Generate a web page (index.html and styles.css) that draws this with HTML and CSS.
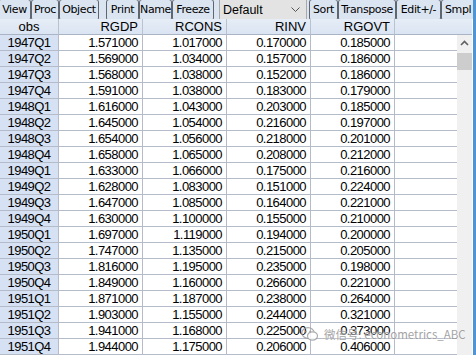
FILE: index.html
```html
<!DOCTYPE html>
<html>
<head>
<meta charset="utf-8">
<link rel="stylesheet" href="styles.css">
</head>
<body>
<div class="win">
  <div class="main">
    <div class="toolbar">
      <span class="btn b-view">View</span>
      <span class="btn b-proc">Proc</span>
      <span class="btn b-object">Object</span>
      <span class="btn b-print">Print</span>
      <span class="btn b-name">Name</span>
      <span class="btn b-freeze">Freeze</span>
      <span class="combo">Default
        <svg class="chev" width="9" height="6" viewBox="0 0 9 6"><path d="M0.5 0.5 L4.5 4.5 L8.5 0.5" fill="none" stroke="#555" stroke-width="1"/></svg>
      </span>
      <span class="btn b-sort">Sort</span>
      <span class="btn b-transpose">Transpose</span>
      <span class="btn b-edit">Edit+/-</span>
      <span class="btn b-smpl">Smpl</span>
    </div>
    <div class="body">
      <div class="grid">
        <div class="h obs">obs</div><div class="h">RGDP</div><div class="h">RCONS</div><div class="h">RINV</div><div class="h">RGOVT</div><div class="h fill"></div>
        <div class="o">1947Q1</div><div class="c">1.571000</div><div class="c">1.017000</div><div class="c">0.170000</div><div class="c">0.185000</div><div class="c fill"></div>
        <div class="o">1947Q2</div><div class="c">1.569000</div><div class="c">1.034000</div><div class="c">0.157000</div><div class="c">0.186000</div><div class="c fill"></div>
        <div class="o">1947Q3</div><div class="c">1.568000</div><div class="c">1.038000</div><div class="c">0.152000</div><div class="c">0.186000</div><div class="c fill"></div>
        <div class="o">1947Q4</div><div class="c">1.591000</div><div class="c">1.038000</div><div class="c">0.183000</div><div class="c">0.179000</div><div class="c fill"></div>
        <div class="o">1948Q1</div><div class="c">1.616000</div><div class="c">1.043000</div><div class="c">0.203000</div><div class="c">0.185000</div><div class="c fill"></div>
        <div class="o">1948Q2</div><div class="c">1.645000</div><div class="c">1.054000</div><div class="c">0.216000</div><div class="c">0.197000</div><div class="c fill"></div>
        <div class="o">1948Q3</div><div class="c">1.654000</div><div class="c">1.056000</div><div class="c">0.218000</div><div class="c">0.201000</div><div class="c fill"></div>
        <div class="o">1948Q4</div><div class="c">1.658000</div><div class="c">1.065000</div><div class="c">0.208000</div><div class="c">0.212000</div><div class="c fill"></div>
        <div class="o">1949Q1</div><div class="c">1.633000</div><div class="c">1.066000</div><div class="c">0.175000</div><div class="c">0.216000</div><div class="c fill"></div>
        <div class="o">1949Q2</div><div class="c">1.628000</div><div class="c">1.083000</div><div class="c">0.151000</div><div class="c">0.224000</div><div class="c fill"></div>
        <div class="o">1949Q3</div><div class="c">1.647000</div><div class="c">1.085000</div><div class="c">0.164000</div><div class="c">0.221000</div><div class="c fill"></div>
        <div class="o">1949Q4</div><div class="c">1.630000</div><div class="c">1.100000</div><div class="c">0.155000</div><div class="c">0.210000</div><div class="c fill"></div>
        <div class="o">1950Q1</div><div class="c">1.697000</div><div class="c">1.119000</div><div class="c">0.194000</div><div class="c">0.200000</div><div class="c fill"></div>
        <div class="o">1950Q2</div><div class="c">1.747000</div><div class="c">1.135000</div><div class="c">0.215000</div><div class="c">0.205000</div><div class="c fill"></div>
        <div class="o">1950Q3</div><div class="c">1.816000</div><div class="c">1.195000</div><div class="c">0.235000</div><div class="c">0.198000</div><div class="c fill"></div>
        <div class="o">1950Q4</div><div class="c">1.849000</div><div class="c">1.160000</div><div class="c">0.266000</div><div class="c">0.221000</div><div class="c fill"></div>
        <div class="o">1951Q1</div><div class="c">1.871000</div><div class="c">1.187000</div><div class="c">0.238000</div><div class="c">0.264000</div><div class="c fill"></div>
        <div class="o">1951Q2</div><div class="c">1.903000</div><div class="c">1.155000</div><div class="c">0.244000</div><div class="c">0.321000</div><div class="c fill"></div>
        <div class="o">1951Q3</div><div class="c">1.941000</div><div class="c">1.168000</div><div class="c">0.225000</div><div class="c">0.373000</div><div class="c fill"></div>
        <div class="o">1951Q4</div><div class="c">1.944000</div><div class="c">1.175000</div><div class="c">0.206000</div><div class="c">0.406000</div><div class="c fill"></div>
      </div>
      <div class="scroll">
        <div class="hcap"></div>
        <div class="track">
          <svg class="up" width="9" height="6" viewBox="0 0 9 6"><path d="M1 5 L4.5 1.5 L8 5" fill="none" stroke="#606060" stroke-width="1.6"/></svg>
          <div class="thumb"></div>
        </div>
      </div>
    </div>
  </div>
  <div class="frame"></div>
  <div class="wm">
    <svg class="wmicon" width="18" height="16" viewBox="0 0 18 16"><ellipse cx="7" cy="7" rx="6.2" ry="5.4" fill="none" stroke="#9a9a9a" stroke-width="1.2"/><ellipse cx="11.5" cy="10" rx="5" ry="4.2" fill="#fff" stroke="#9a9a9a" stroke-width="1.2"/><circle cx="5" cy="5.5" r="0.9" fill="#9a9a9a"/><circle cx="9" cy="5.5" r="0.9" fill="#9a9a9a"/></svg>
    <span class="wmtext">微信号: econometrics_ABC</span>
  </div>
</div>
</body>
</html>
```
FILE: styles.css
```css
html, body {
  margin: 0;
  padding: 0;
  background: #ffffff;
  overflow: hidden;
}
.win {
  position: relative;
  display: flex;
  width: 476px;
  height: 355px;
  overflow: hidden;
}
.main {
  width: 473px;
  display: flex;
  flex-direction: column;
}
.frame {
  width: 3px;
  background: #4f94d6;
}
.toolbar {
  height: 26px;
  background: #dbe5f2;
  display: flex;
  align-items: center;
  font-family: "DejaVu Sans", sans-serif;
  font-size: 11px;
  letter-spacing: -0.4px;
  color: #000;
  white-space: nowrap;
  overflow: hidden;
}
.btn {
  box-sizing: border-box;
  height: 22px;
  border: 1px solid #5f6670;
  border-radius: 3px;
  display: flex;
  align-items: center;
  justify-content: center;
  flex: none;
}
.b-view { width: 33px; margin-left: -2px; }
.b-proc { width: 28px; }
.b-object { width: 40px; }
.b-print { width: 33px; margin-left: 7px; }
.b-name { width: 33px; }
.b-freeze { width: 42px; }
.b-sort { width: 29px; margin-left: 2px; }
.b-transpose { width: 58px; }
.b-edit { width: 45px; }
.b-smpl { width: 36px; justify-content: flex-start; padding-left: 3px; }
.combo {
  box-sizing: border-box;
  flex: none;
  width: 88px;
  height: 21px;
  margin-left: 5px;
  background: #e3e3e3;
  border: 1px solid #a9a9a9;
  display: flex;
  align-items: center;
  justify-content: space-between;
  padding: 0 6px 0 3px;
  font-family: "Liberation Sans", sans-serif;
  font-size: 12.5px;
  letter-spacing: 0;
}
.body {
  flex: 1;
  display: flex;
}
.grid {
  display: grid;
  grid-template-columns: 59px 84px 84px 84px 84px 62px;
  grid-auto-rows: 16px;
  font-family: "Liberation Sans", Arial, sans-serif;
  font-size: 13px;
  letter-spacing: -0.55px;
  color: #000;
  align-content: start;
}
.grid > div {
  box-sizing: border-box;
  border-right: 1px solid #b4bcc9;
  border-bottom: 1px solid #b4bcc9;
  line-height: 15px;
  text-align: right;
  padding-right: 4px;
  white-space: nowrap;
}
.grid > .h {
  background: linear-gradient(#e6edf7, #dae4f2);
  border-right-color: #b9c2cf;
  border-bottom-color: #a9b4c4;
  letter-spacing: 0;
}
.grid > .obs, .grid > .o {
  text-align: center;
  padding-right: 0;
}
.grid > .o {
  background: #d6e2f3;
}
.grid > .fill {
  border-right: none;
}
.scroll {
  width: 15px;
  display: flex;
  flex-direction: column;
}
.hcap {
  height: 16px;
  background: linear-gradient(#e6edf7, #dae4f2);
  border-bottom: 1px solid #a9b4c4;
  box-sizing: border-box;
}
.track {
  flex: 1;
  background: #f0f0f0;
  display: flex;
  flex-direction: column;
  align-items: center;
}
.up {
  margin-top: 5px;
  flex: none;
}
.thumb {
  margin-top: 7px;
  width: 15px;
  height: 17px;
  background: #cdcdcd;
}
.wm {
  position: absolute;
  left: 301px;
  top: 326px;
  display: flex;
  align-items: center;
  gap: 5px;
  opacity: 0.8;
  pointer-events: none;
}
.wmtext {
  font-family: "Noto Sans CJK SC", "Liberation Sans", sans-serif;
  font-size: 11.5px;
  color: #8e8e8e;
  text-shadow: 0 0 2px #fff, 0 0 1px #fff;
  white-space: nowrap;
}
```
